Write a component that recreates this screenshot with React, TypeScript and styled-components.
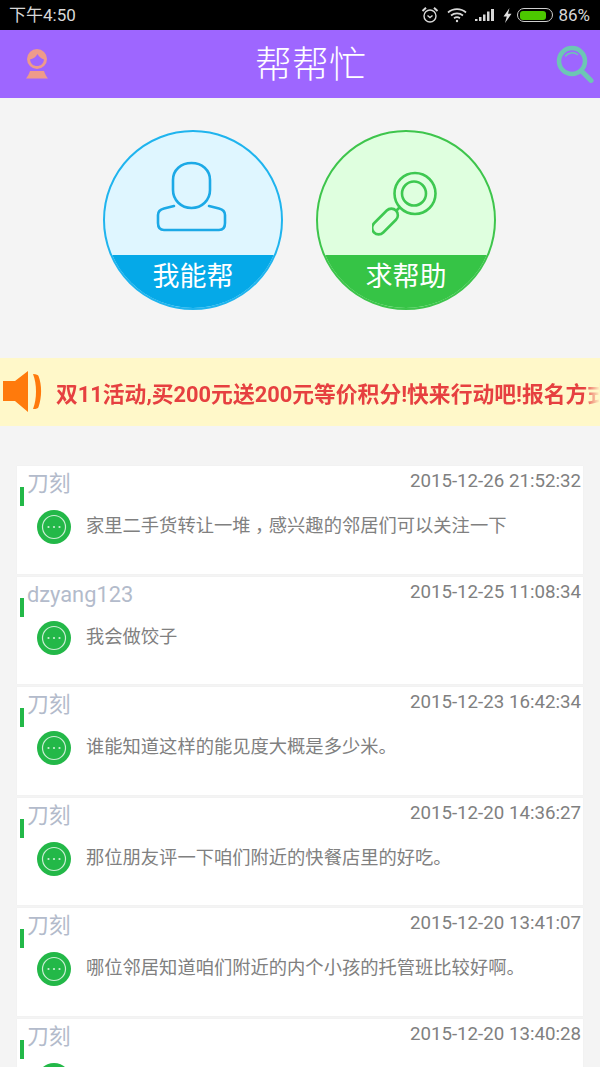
import React from 'react';
import styled, { createGlobalStyle } from 'styled-components';

const CJK = `"Roboto", "Noto Sans CJK SC", sans-serif`;

const GlobalStyle = createGlobalStyle`
    html, body {
        margin: 0;
        padding: 0;
        background: #f4f4f4;
    }
    body {
        width: 600px;
        height: 1067px;
        overflow: hidden;
        font-family: ${CJK};
    }
`;

// half-width glyph with even padding, so the comma sits mid-cell instead of at the left
const Comma = styled.span`
    font-feature-settings: "halt";
    padding: 0 0.25em;
`;

type Post = {
    author: string
    time: string
    text: React.ReactNode
};

const posts: Post[] = [
    {
        author: '刀刻',
        time: '2015-12-26 21:52:32',
        text: <>家里二手货转让一堆<Comma>，</Comma>感兴趣的邻居们可以关注一下</>,
    },
    { author: 'dzyang123', time: '2015-12-25 11:08:34', text: '我会做饺子' },
    { author: '刀刻', time: '2015-12-23 16:42:34', text: '谁能知道这样的能见度大概是多少米。' },
    { author: '刀刻', time: '2015-12-20 14:36:27', text: '那位朋友评一下咱们附近的快餐店里的好吃。' },
    { author: '刀刻', time: '2015-12-20 13:41:07', text: '哪位邻居知道咱们附近的内个小孩的托管班比较好啊。' },
    { author: '刀刻', time: '2015-12-20 13:40:28', text: '' },
];

const AlarmIcon = () => (
    <svg width="18" height="18" viewBox="0 0 18 18" fill="none" stroke="#d8d8d8" strokeWidth="1.4">
        <circle cx="9" cy="10" r="6" />
        <path d="M6.5 9.5 L9 11.5 L11.5 9.5" />
        <path d="M1.5 5 L5 1.8 M16.5 5 L13 1.8" strokeWidth="2" />
    </svg>
);

const WifiIcon = () => (
    <svg width="20" height="16" viewBox="0 0 20 16" fill="none" stroke="#d8d8d8" strokeWidth="1.7">
        <path d="M1 5.5 C6 1 14 1 19 5.5" />
        <path d="M4 8.5 C7.5 5.6 12.5 5.6 16 8.5" />
        <path d="M7 11.3 C8.8 10 11.2 10 13 11.3" />
        <circle cx="10" cy="14" r="1.2" fill="#d8d8d8" stroke="none" />
    </svg>
);

const SignalIcon = () => (
    <svg width="20" height="14" viewBox="0 0 20 14" fill="#d8d8d8">
        <rect x="0" y="11" width="2.5" height="2" />
        <rect x="4" y="9" width="2.5" height="4" />
        <rect x="8" y="6.5" width="2.5" height="6.5" />
        <rect x="12" y="3.5" width="2.5" height="9.5" />
        <rect x="16" y="1" width="3" height="12" />
    </svg>
);

const BoltIcon = () => (
    <svg width="9" height="15" viewBox="0 0 9 15" fill="#e0e0e0">
        <path d="M6.5 0 L0.5 8.5 H3.8 L2 15 L8.5 5.8 H5 Z" />
    </svg>
);

const AvatarIcon = () => (
    <svg width="24" height="30" viewBox="0 0 24 30">
        <circle cx="12" cy="10" r="10" fill="#ee9b8a" />
        <path d="M5 10.5 C8 10 11 8 12.5 5 C14 8 16.5 9.5 19 10.5 C18.5 15 15.5 17 12 17 C8.5 17 5.5 15 5 10.5 Z" fill="#9e66ff" />
        <path d="M5 22 H19 C20 25 21.5 27.5 23 29.5 H1 C2.5 27.5 4 25 5 22 Z" fill="#ee9b8a" />
    </svg>
);

const SearchIcon = () => (
    <svg width="38" height="38" viewBox="0 0 38 38" fill="none" stroke="#6cc7b4">
        <circle cx="16" cy="16" r="13" strokeWidth="4.5" />
        <path d="M9.5 11 C12 7.5 18 6.8 21.5 9.5" strokeWidth="1.5" strokeLinecap="round" />
        <path d="M25.5 26 L35 35.5" strokeWidth="5" strokeLinecap="round" />
    </svg>
);

const PersonIcon = () => (
    <svg width="72" height="72" viewBox="0 0 72 72" fill="none" stroke="#1ca9e6" strokeWidth="2.6">
        <path d="M35.5 2 C46 2 54 9 54 19 V29 C54 39 46 47 35.5 47 C25 47 17 39 17 29 V19 C17 9 25 2 35.5 2 Z" />
        <path d="M18 45 L8 47.5 C4 48.5 2 51 2 54 V62 C2 66 4 69 8 69 H63 C67 69 69 66 69 62 V54 C69 51 67 48.5 63 47.5 L53 45" strokeLinecap="round" />
    </svg>
);

const MagnifierIcon = () => (
    <svg width="68" height="68" viewBox="0 0 68 68" fill="none" stroke="#3ec851" strokeWidth="2.6">
        <circle cx="43" cy="23.5" r="20.5" />
        <circle cx="42" cy="23.5" r="12" />
        <rect x="-6.5" y="-15.5" width="13" height="31" rx="6.5" transform="translate(13 51.5) rotate(45)" />
        <path d="M24 41 L28 37" />
    </svg>
);

const SpeakerIcon = () => (
    <svg width="46" height="42" viewBox="0 0 46 42" fill="#ff7a0c">
        <path d="M3 10 H15 L28 0 V41 L15 30 H3 Z" />
        <path d="M33 3 C36.5 3 38 4 38.5 5 C42 14 42 26 38.5 36 C38 37.5 36.5 38 33 38 C37 28 37 13 33 3 Z" />
    </svg>
);

const BubbleIcon = () => (
    <svg width="34" height="34" viewBox="0 0 34 34">
        <circle cx="17" cy="17" r="17" fill="#23b848" />
        <circle cx="17" cy="17" r="11.5" fill="none" stroke="#cdeed5" strokeWidth="1.2" />
        <circle cx="11.5" cy="17" r="1.1" fill="#cdeed5" />
        <circle cx="17" cy="17" r="1.1" fill="#cdeed5" />
        <circle cx="22.5" cy="17" r="1.1" fill="#cdeed5" />
    </svg>
);

const App = () => {
    return (
        <Screen>
            <GlobalStyle />
            <StatusBar>
                <Clock>下午4:50</Clock>
                <StatusIcons>
                    <AlarmIcon />
                    <WifiIcon />
                    <SignalIcon />
                    <BoltIcon />
                    <Battery><BatteryLevel /></Battery>
                    <Percent>86%</Percent>
                </StatusIcons>
            </StatusBar>
            <Header>
                <AvatarIcon />
                <HeaderTitle>帮帮忙</HeaderTitle>
                <SearchIcon />
            </Header>
            <Actions>
                <Circle $ring="#1fb4ee" $fill="#dff6ff">
                    <CircleIcon $top={31} $shift={-2}><PersonIcon /></CircleIcon>
                    <CircleLabel $fill="#05a9e8">我能帮</CircleLabel>
                </Circle>
                <Circle $ring="#3ec54c" $fill="#dfffdf">
                    <CircleIcon $top={40} $shift={0}><MagnifierIcon /></CircleIcon>
                    <CircleLabel $fill="#36c446">求帮助</CircleLabel>
                </Circle>
            </Actions>
            <Notice>
                <SpeakerIcon />
                <NoticeText>双11活动,买200元送200元等价积分!快来行动吧!报名方式</NoticeText>
            </Notice>
            <PostList>
                {posts.map((post) => (
                    <PostCard key={post.time}>
                        <PostMeta>
                            <Author>{post.author}</Author>
                            <PostTime>{post.time}</PostTime>
                        </PostMeta>
                        <AccentMark />
                        <PostBody>
                            <BubbleIcon />
                            <PostText>{post.text}</PostText>
                        </PostBody>
                    </PostCard>
                ))}
            </PostList>
        </Screen>
    );
};

export default App;

const Screen = styled.div`
    width: 600px;
    height: 1067px;
    overflow: hidden;
    background: #f4f4f4;
`;

const StatusBar = styled.div`
    height: 30px;
    background: #000;
    color: #d8d8d8;
    display: flex;
    align-items: center;
    justify-content: space-between;
    padding: 0 10px 0 9px;
`;

const Clock = styled.span`
    font-size: 17px;
    line-height: 30px;
`;

const StatusIcons = styled.div`
    display: flex;
    align-items: center;
    gap: 8px;
`;

const Battery = styled.div`
    width: 36px;
    height: 14px;
    border: 1px solid #cfcfcf;
    border-radius: 7px;
    padding: 1.5px 2px;
    box-sizing: border-box;
    margin-left: -3px;
`;

const BatteryLevel = styled.div`
    width: 86%;
    height: 100%;
    background: #4cc800;
    border-radius: 3px;
`;

const Percent = styled.span`
    font-size: 17px;
    margin-left: -3px;
`;

const Header = styled.div`
    height: 68px;
    background: #9e66ff;
    display: flex;
    align-items: center;
    justify-content: space-between;
    padding: 0 6px 0 25px;
`;

const HeaderTitle = styled.div`
    color: #fff;
    font-size: 37px;
    font-weight: 300;
    margin: 0 0 4px 16px;
`;

const Actions = styled.div`
    height: 260px;
    display: flex;
    justify-content: center;
    align-items: flex-start;
    gap: 33px;
    padding: 32px 1px 0 0;
    box-sizing: border-box;
`;

const Circle = styled.div<{ $ring: string; $fill: string }>`
    position: relative;
    width: 180px;
    height: 180px;
    box-sizing: border-box;
    border: 2px solid ${(p) => p.$ring};
    border-radius: 50%;
    background: ${(p) => p.$fill};
    overflow: hidden;
`;

const CircleIcon = styled.div<{ $top: number; $shift: number }>`
    display: flex;
    justify-content: center;
    padding-top: ${(p) => p.$top - 2}px;
    margin-left: ${(p) => p.$shift}px;
`;

const CircleLabel = styled.div<{ $fill: string }>`
    position: absolute;
    left: 0;
    right: 0;
    bottom: 0;
    height: 53px;
    background: ${(p) => p.$fill};
    color: #fff;
    font-size: 27px;
    line-height: 44px;
    text-align: center;
`;

const Notice = styled.div`
    height: 68px;
    background: #fff8c9;
    display: flex;
    align-items: center;
    gap: 10px;
    white-space: nowrap;
    overflow: hidden;
`;

const NoticeText = styled.span`
    color: #e64040;
    font-size: 21.8px;
    font-weight: 700;
    flex: 1;
    overflow: hidden;
    mask-image: linear-gradient(to right, #000 calc(100% - 16px), transparent);
`;

const PostList = styled.div`
    margin-top: 40px;
    padding: 0 17px;
    display: flex;
    flex-direction: column;
    gap: 3px;
`;

const PostCard = styled.div`
    position: relative;
    height: 107.5px;
    flex: none;
    background: #fff;
    box-shadow: 0 0 1px #e6e6e6;
`;

const PostMeta = styled.div`
    display: flex;
    justify-content: space-between;
    align-items: flex-start;
    padding: 3px 2px 0 10px;
`;

const Author = styled.span`
    color: #b3bbcb;
    font-size: 21.8px;
    line-height: 30px;
`;

const PostTime = styled.span`
    color: #808080;
    font-size: 18.7px;
    line-height: 24px;
`;

const AccentMark = styled.div`
    position: absolute;
    left: 3px;
    top: 21px;
    width: 4px;
    height: 19px;
    background: #23b848;
`;

const PostBody = styled.div`
    display: flex;
    align-items: center;
    gap: 15px;
    padding: 11px 0 0 20px;
`;

const PostText = styled.span`
    color: #808080;
    font-size: 18.3px;
    position: relative;
    top: -3px;
`;
